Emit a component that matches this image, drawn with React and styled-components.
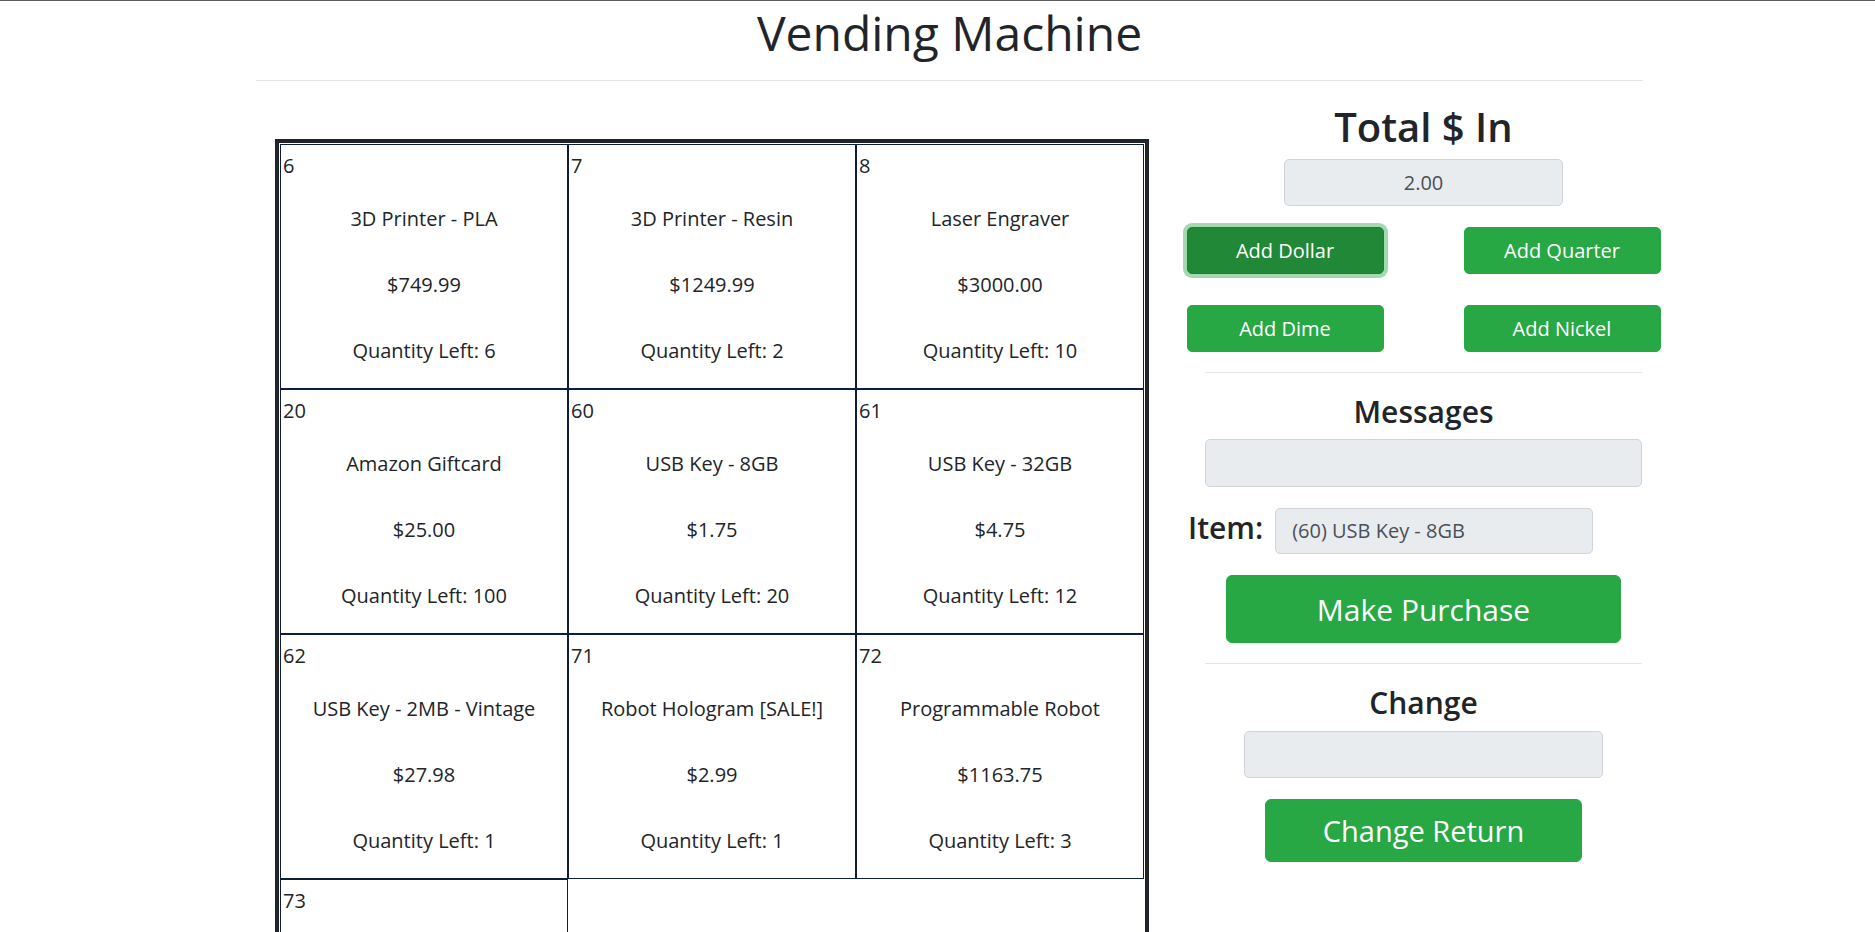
import styled, { createGlobalStyle } from "styled-components";

const GlobalStyle = createGlobalStyle`
  body {
    margin: 0;
    border-top: 1px solid #5c5c5c;
    font-family: "Open Sans", "Liberation Sans", sans-serif;
    font-size: 20px;
    color: #212529;
    background: #fff;
  }
`;

const items = [
  { id: 6, name: "3D Printer - PLA", price: "749.99", qty: 6 },
  { id: 7, name: "3D Printer - Resin", price: "1249.99", qty: 2 },
  { id: 8, name: "Laser Engraver", price: "3000.00", qty: 10 },
  { id: 20, name: "Amazon Giftcard", price: "25.00", qty: 100 },
  { id: 60, name: "USB Key - 8GB", price: "1.75", qty: 20 },
  { id: 61, name: "USB Key - 32GB", price: "4.75", qty: 12 },
  { id: 62, name: "USB Key - 2MB - Vintage", price: "27.98", qty: 1 },
  { id: 71, name: "Robot Hologram [SALE!]", price: "2.99", qty: 1 },
  { id: 72, name: "Programmable Robot", price: "1163.75", qty: 3 },
  { id: 73, name: "Robot Kit", price: "89.99", qty: 4 },
];

const App = () => {
  return (
    <>
      <GlobalStyle />
      <Page>
        <Title>Vending Machine</Title>
        <Rule />
        <Main>
          <ItemGrid>
            {items.map((item) => (
              <ItemCell key={item.id}>
                <ItemNumber>{item.id}</ItemNumber>
                <ItemLines>
                  <span>{item.name}</span>
                  <span>${item.price}</span>
                  <span>Quantity Left: {item.qty}</span>
                </ItemLines>
              </ItemCell>
            ))}
          </ItemGrid>

          <Side>
            <Heading $size={40}>Total $ In</Heading>
            <ReadField $width={279} $center style={{ marginTop: 8 }}>2.00</ReadField>

            <CoinGrid>
              <GreenButton $focus>Add Dollar</GreenButton>
              <GreenButton>Add Quarter</GreenButton>
              <GreenButton>Add Dime</GreenButton>
              <GreenButton>Add Nickel</GreenButton>
            </CoinGrid>

            <SideRule />
            <Heading $size={30}>Messages</Heading>
            <ReadField $width={437} $height={48} style={{ marginTop: 9 }} />

            <ItemRow>
              <ItemLabel>Item:</ItemLabel>
              <ReadField $width={318} $height={46}>(60) USB Key - 8GB</ReadField>
            </ItemRow>

            <BigButton $width={395} $height={68} $size={30}>Make Purchase</BigButton>

            <SideRule />
            <Heading $size={30}>Change</Heading>
            <ReadField $width={359} style={{ marginTop: 10 }} />
            <BigButton $width={317} $height={63} $size={29}>Change Return</BigButton>
          </Side>
        </Main>
      </Page>
    </>
  );
};

const Page = styled.div`
  width: 1387px;
  margin-left: 256px;
`;

const Title = styled.h1`
  margin: 0;
  padding-top: 2px;
  font-size: 48px;
  font-weight: 500;
  line-height: 60px;
  text-align: center;
  color: #212529;
`;

const Rule = styled.hr`
  margin: 17px 0 0;
  border: 0;
  border-top: 1px solid rgba(0, 0, 0, 0.1);
`;

const Main = styled.div`
  display: flex;
  align-items: flex-start;
  padding-top: 22px;
`;

const ItemGrid = styled.div`
  display: flex;
  flex-wrap: wrap;
  flex-shrink: 0;
  align-content: flex-start;
  width: 864px;
  margin: 36px 0 0 19px;
  padding: 1px;
  border: 4px solid #212529;
`;

const ItemCell = styled.div`
  box-sizing: border-box;
  width: 288px;
  height: 245px;
  padding: 6px 2px 0;
  border: 1px solid #0b1d40;
`;

const ItemNumber = styled.div`
  font-size: 20px;
  line-height: 30px;
`;

const ItemLines = styled.div`
  display: flex;
  flex-direction: column;
  align-items: center;
  gap: 36px;
  margin-top: 23px;
  font-size: 20px;
  line-height: 30px;
  text-align: center;
`;

const Side = styled.div`
  display: flex;
  flex-direction: column;
  align-items: center;
  flex-shrink: 0;
  width: 549px;
`;

const Heading = styled.h2`
  margin: 0;
  font-size: ${(p) => p.$size}px;
  font-weight: 600;
  line-height: 1.2;
  color: #212529;
`;

const ReadField = styled.div`
  box-sizing: border-box;
  display: flex;
  align-items: center;
  justify-content: ${(p) => (p.$center ? "center" : "flex-start")};
  width: ${(p) => p.$width}px;
  height: ${(p) => p.$height || 47}px;
  padding: 0 16px;
  background: #e9ecef;
  border: 1px solid #ced4da;
  border-radius: 5px;
  font-size: 20px;
  color: #495057;
`;

const CoinGrid = styled.div`
  display: grid;
  grid-template-columns: 197px 197px;
  column-gap: 80px;
  row-gap: 31px;
  margin-top: 21px;
`;

const GreenButton = styled.button`
  height: 47px;
  padding: 0;
  border: 1px solid ${(p) => (p.$focus ? "#1e7e34" : "#28a745")};
  border-radius: 5px;
  background: ${(p) => (p.$focus ? "#218838" : "#28a745")};
  box-shadow: ${(p) => (p.$focus ? "0 0 0 4px rgba(72, 180, 97, 0.5)" : "none")};
  color: #fff;
  font-family: inherit;
  font-size: 20px;
`;

const SideRule = styled.hr`
  width: 437px;
  margin: 20px 0 21px;
  border: 0;
  border-top: 1px solid rgba(0, 0, 0, 0.1);
`;

const ItemRow = styled.div`
  display: flex;
  align-items: center;
  gap: 12px;
  width: 475px;
  margin-top: 20px;
  padding-left: 2px;
  box-sizing: border-box;
`;

const ItemLabel = styled.span`
  margin-bottom: 6px;
  font-size: 30px;
  font-weight: 600;
`;

const BigButton = styled.button`
  width: ${(p) => p.$width}px;
  height: ${(p) => p.$height}px;
  margin-top: 21px;
  padding: 0;
  border: 1px solid #28a745;
  border-radius: 6px;
  background: #28a745;
  color: #fff;
  font-family: inherit;
  font-size: ${(p) => p.$size}px;
`;

export default App;
